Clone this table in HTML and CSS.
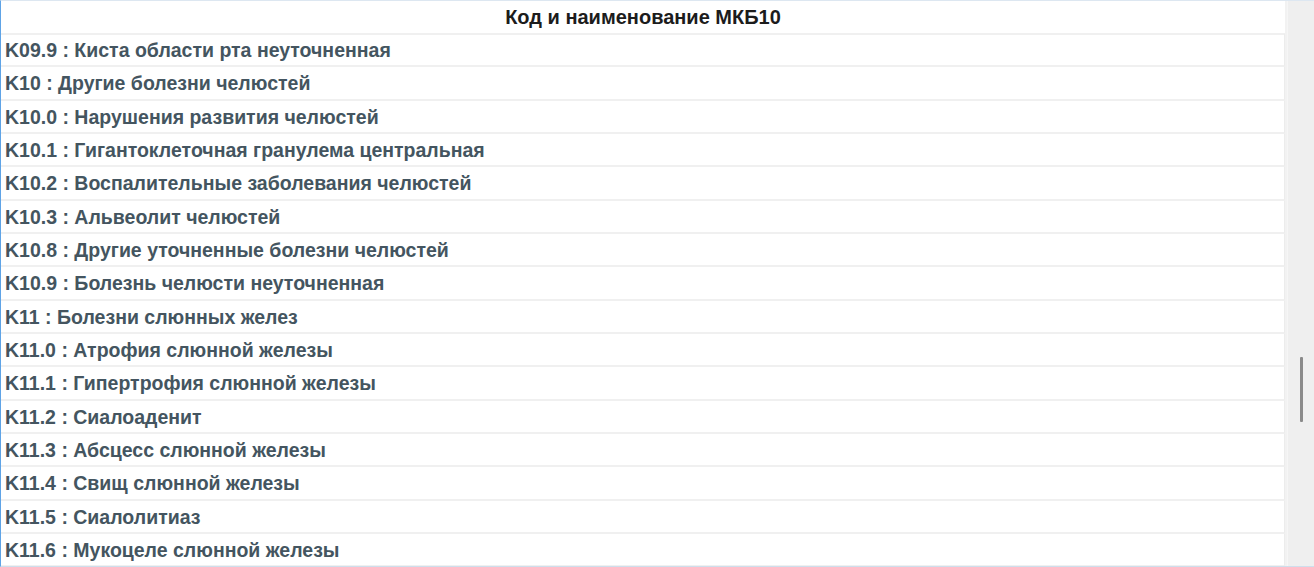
FILE: index.html
```html
<!DOCTYPE html>
<html lang="ru">
<head>
<meta charset="utf-8">
<title>МКБ10</title>
<link rel="stylesheet" href="styles.css">
</head>
<body>
<div class="grid">
  <div class="table">
    <div class="head">Код и наименование МКБ10</div>
    <div class="row">K09.9 : Киста области рта неуточненная</div>
    <div class="row">K10 : Другие болезни челюстей</div>
    <div class="row">K10.0 : Нарушения развития челюстей</div>
    <div class="row">K10.1 : Гигантоклеточная гранулема центральная</div>
    <div class="row">K10.2 : Воспалительные заболевания челюстей</div>
    <div class="row">K10.3 : Альвеолит челюстей</div>
    <div class="row">K10.8 : Другие уточненные болезни челюстей</div>
    <div class="row">K10.9 : Болезнь челюсти неуточненная</div>
    <div class="row">K11 : Болезни слюнных желез</div>
    <div class="row">K11.0 : Атрофия слюнной железы</div>
    <div class="row">K11.1 : Гипертрофия слюнной железы</div>
    <div class="row">K11.2 : Сиалоаденит</div>
    <div class="row">K11.3 : Абсцесс слюнной железы</div>
    <div class="row">K11.4 : Свищ слюнной железы</div>
    <div class="row">K11.5 : Сиалолитиаз</div>
    <div class="row">K11.6 : Мукоцеле слюнной железы</div>
  </div>
  <div class="scrollbar"><div class="thumb"></div></div>
</div>
</body>
</html>
```

FILE: styles.css
```css
html, body {
  margin: 0;
  padding: 0;
  background: #ffffff;
}
.grid {
  display: flex;
  height: 567px;
  box-sizing: border-box;
  border-top: 1px solid #dde7f1;
  border-bottom: 1px solid #cfdeec;
  border-left: 1px solid #5ea3e6;
  overflow: hidden;
  font-family: "Liberation Sans", Arial, sans-serif;
  font-weight: bold;
  font-size: 19.5px;
}
.table {
  flex: 1;
  display: flex;
  flex-direction: column;
  border-right: 2px solid #f2f2f2;
}
.head {
  height: 32px;
  line-height: 32px;
  text-align: center;
  font-size: 20px;
  color: #1c1c1c;
  border-bottom: 2px solid #f0f0f0;
  box-sizing: content-box;
  margin-bottom: -1px;
}
.row {
  height: 33.33px;
  line-height: 32px;
  box-sizing: border-box;
  padding-left: 4px;
  color: #445560;
  border-bottom: 2px solid #f0f0f0;
  border-right: 1px solid #ececec;
  white-space: nowrap;
}
.scrollbar {
  width: 27px;
  background: #efefef;
  border-left: 1px solid #f6f6f6;
  padding-top: 356px;
  box-sizing: border-box;
}
.thumb {
  width: 3px;
  height: 65px;
  margin-left: 12px;
  background: #8a8a8a;
  border-radius: 1px;
}
```
